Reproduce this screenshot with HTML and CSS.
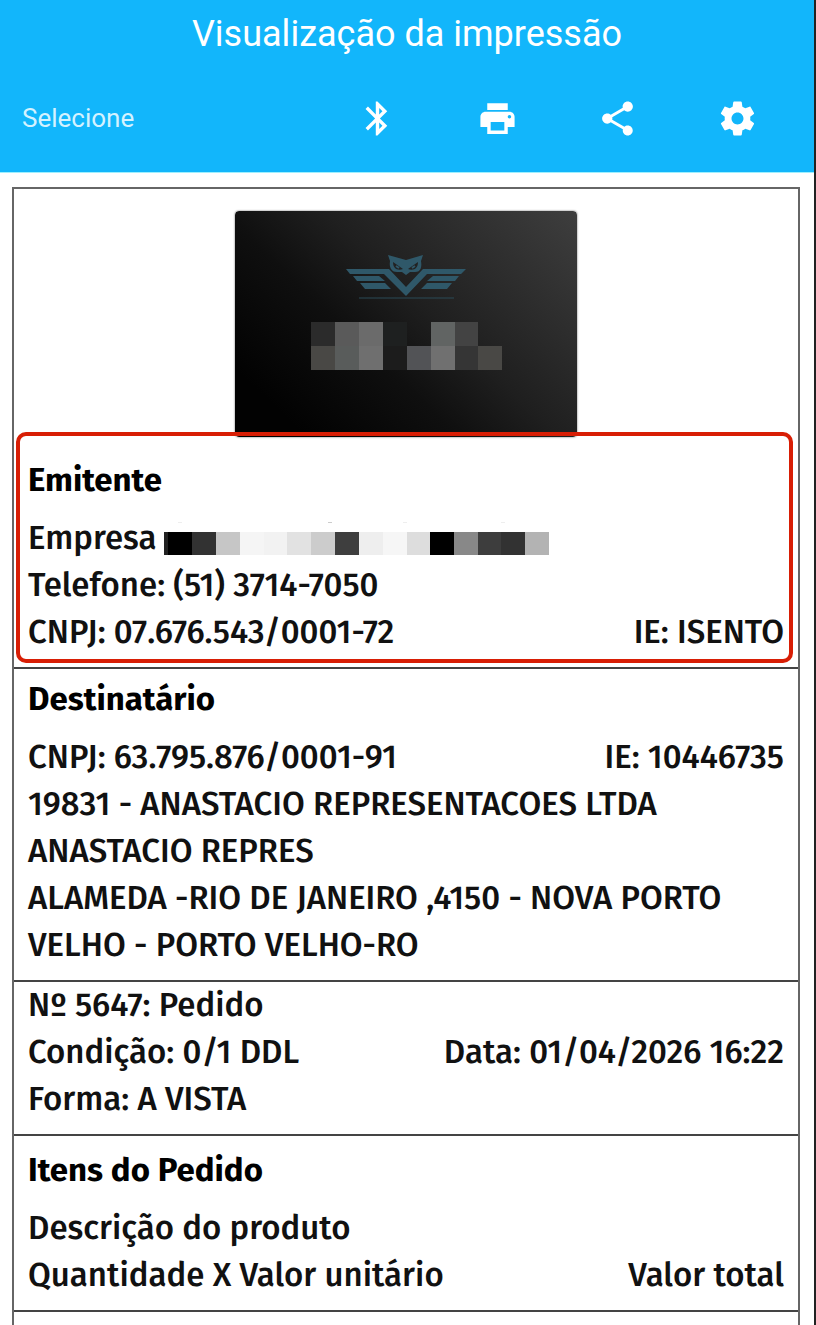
FILE: index.html
```html
<!DOCTYPE html>
<html lang="pt-BR">
<head>
    <meta charset="UTF-8">
    <meta name="viewport" content="width=device-width, initial-scale=1.0">
    <title>Visualização da impressão</title>
    <link rel="stylesheet" href="styles.css">
</head>
<body>

<header class="topbar">
    <h1 class="title">Visualização da impressão</h1>
    <div class="toolbar">
        <select class="printer" aria-label="Impressora">
            <option>Selecione</option>
        </select>
        <button class="tool" type="button" aria-label="Bluetooth">
            <svg viewBox="0 0 24 24"><path d="M17.71 7.71L12 2h-1v7.59L6.41 5 5 6.41 10.59 12 5 17.59 6.41 19 11 14.41V22h1l5.71-5.71-4.3-4.29 4.3-4.29zM13 5.83l1.88 1.88L13 9.59V5.83zm1.88 10.46L13 18.17v-3.76l1.88 1.88z"/></svg>
        </button>
        <button class="tool" type="button" aria-label="Imprimir">
            <svg viewBox="0 0 24 24"><path d="M19 8H5c-1.66 0-3 1.34-3 3v6h4v4h12v-4h4v-6c0-1.66-1.34-3-3-3zm-3 11H8v-5h8v5zm3-7c-.55 0-1-.45-1-1s.45-1 1-1 1 .45 1 1-.45 1-1 1zm-1-9H6v4h12V3z"/></svg>
        </button>
        <button class="tool" type="button" aria-label="Compartilhar">
            <svg viewBox="0 0 24 24"><path d="M18 16.08c-.76 0-1.44.3-1.96.77L8.91 12.7c.05-.23.09-.46.09-.7s-.04-.47-.09-.7l7.05-4.11c.54.5 1.25.81 2.04.81 1.66 0 3-1.34 3-3s-1.34-3-3-3-3 1.34-3 3c0 .24.04.47.09.7L8.04 9.81C7.5 9.31 6.79 9 6 9c-1.66 0-3 1.34-3 3s1.34 3 3 3c.79 0 1.5-.31 2.04-.81l7.12 4.16c-.05.21-.08.43-.08.65 0 1.61 1.31 2.92 2.92 2.92s2.92-1.31 2.92-2.92-1.31-2.92-2.92-2.92z"/></svg>
        </button>
        <button class="tool" type="button" aria-label="Configurações">
            <svg viewBox="0 0 24 24"><path d="M19.43 12.98c.04-.32.07-.64.07-.98s-.03-.66-.07-.98l2.11-1.65c.19-.15.24-.42.12-.64l-2-3.46c-.12-.22-.39-.3-.61-.22l-2.49 1c-.52-.4-1.08-.73-1.69-.98l-.38-2.65C14.46 2.18 14.25 2 14 2h-4c-.25 0-.46.18-.49.42l-.38 2.65c-.61.25-1.17.59-1.69.98l-2.49-1c-.23-.09-.49 0-.61.22l-2 3.46c-.13.22-.07.49.12.64l2.11 1.65c-.04.32-.07.65-.07.98s.03.66.07.98l-2.11 1.65c-.19.15-.24.42-.12.64l2 3.46c.12.22.39.3.61.22l2.49-1c.52.4 1.08.73 1.69.98l.38 2.65c.03.24.24.42.49.42h4c.25 0 .46-.18.49-.42l.38-2.65c.61-.25 1.17-.59 1.69-.98l2.49 1c.23.09.49 0 .61-.22l2-3.46c.12-.22.07-.49-.12-.64l-2.11-1.65zM12 15.5c-1.93 0-3.5-1.57-3.5-3.5s1.57-3.5 3.5-3.5 3.5 1.57 3.5 3.5-1.57 3.5-3.5 3.5z"/></svg>
        </button>
    </div>
</header>

<main class="receipt">

    <svg class="logo" viewBox="0 0 342 226" role="img" aria-label="Logo da empresa">
        <defs>
            <linearGradient id="card" x1="0" y1=".7" x2="1" y2="0">
                <stop offset="0" stop-color="#020202"/>
                <stop offset=".3" stop-color="#0f0f0f"/>
                <stop offset=".5" stop-color="#1f1f1f"/>
                <stop offset="1" stop-color="#3e3e3e"/>
            </linearGradient>
        </defs>
        <rect width="342" height="226" rx="4" fill="url(#card)"/>
        <!-- owl with open wings -->
        <g fill="#2f5869">
            <path d="M111 58h43l17 18 17-18h43l-5 5h-34l-21 22-22-22h-34z"/>
            <path d="M118 65h26l6 5h-28zM224 65h-26l-6 5h28zM125 72h25l6 6h-26zM217 72h-25l-6 6h26z"/>
            <path d="M153 44l18 5 17-5-2 6c1 6 0 11-6 11h-5l-4 3-4-3h-5c-6 0-8-5-7-11z"/>
        </g>
        <path d="M158 51l10 7c-5 2-10 0-10-7zM183 51l-10 7c5 2 10 0 10-7z" fill="#222"/>
        <path d="M161 55l3 2M180 55l-3 2" stroke="#2f5869" stroke-width="2"/>
        <path d="M124 87h95" stroke="#2b4a56"/>
        <!-- company name, masked -->
        <g>
            <path fill="#2b2b2b" d="M76 111h24v24H76z"/>
            <path fill="#5a5a5a" d="M100 111h24v24h-24z"/>
            <path fill="#6b6b6b" d="M124 111h24v24h-24z"/>
            <path fill="#1e2020" d="M148 111h24v24h-24z"/>
            <path fill="#616463" d="M196 111h24v24h-24z"/>
            <path fill="#434343" d="M220 111h23v24h-23z"/>
            <path fill="#494845" d="M76 135h24v24H76z"/>
            <path fill="#595c5b" d="M100 135h24v24h-24z"/>
            <path fill="#6f6f6f" d="M124 135h24v24h-24z"/>
            <path fill="#1c1c1c" d="M148 135h24v24h-24z"/>
            <path fill="#525356" d="M172 135h24v24h-24z"/>
            <path fill="#707070" d="M196 135h24v24h-24z"/>
            <path fill="#353535" d="M220 135h23v24h-23z"/>
            <path fill="#494845" d="M243 135h24v24h-24z"/>
        </g>
    </svg>

    <section class="block emitente">
        <h2>Emitente</h2>
        <div class="row company">
            <span>Empresa</span>
            <svg class="mask" viewBox="0 0 385 33" aria-hidden="true" shape-rendering="crispEdges">
                <path fill="#222" d="M0 10h4v23H0z"/>
                <path fill="#000" d="M4 10h24v23H4z"/>
                <path fill="#323232" d="M28 10h24v23H28z"/>
                <path fill="#c6c6c6" d="M52 10h24v23H52z"/>
                <path fill="#f5f5f5" d="M76 10h24v23H76z"/>
                <path fill="#f2f2f2" d="M100 10h23v23h-23z"/>
                <path fill="#e2e2e2" d="M123 10h24v23h-24z"/>
                <path fill="#ccc" d="M147 10h24v23h-24z"/>
                <path fill="#3e3e3e" d="M171 10h24v23h-24z"/>
                <path fill="#eee" d="M195 10h24v23h-24z"/>
                <path fill="#f6f6f6" d="M219 10h24v23h-24z"/>
                <path fill="#ddd" d="M243 10h23v23h-23z"/>
                <path fill="#000" d="M266 10h24v23h-24z"/>
                <path fill="#888" d="M290 10h24v23h-24z"/>
                <path fill="#3d3d3d" d="M314 10h23v23h-23z"/>
                <path fill="#323232" d="M337 10h24v23h-24z"/>
                <path fill="#b3b3b3" d="M361 10h24v23h-24z"/>
                <path fill="#eee" d="M14 0h4v1h-4zM239 0h4v1h-4zM337 0h4v1h-4z"/>
                <path fill="#ccc" d="M164 0h4v1h-4z"/>
            </svg>
        </div>
        <div class="row"><span>Telefone: (51) 3714-7050</span></div>
        <div class="row"><span>CNPJ: 07.676.543/0001-72</span><span>IE: ISENTO</span></div>
    </section>

    <section class="block destinatario">
        <h2>Destinatário</h2>
        <div class="row"><span>CNPJ: 63.795.876/0001-91</span><span>IE: 10446735</span></div>
        <p>19831 - ANASTACIO REPRESENTACOES LTDA</p>
        <p>ANASTACIO REPRES</p>
        <p>ALAMEDA -RIO DE JANEIRO ,4150 - NOVA PORTO VELHO - PORTO VELHO-RO</p>
    </section>

    <section class="block pedido">
        <p>Nº 5647: Pedido</p>
        <div class="row"><span>Condição: 0/1 DDL</span><span>Data: 01/04/2026 16:22</span></div>
        <p>Forma: A VISTA</p>
    </section>

    <section class="block itens">
        <h2>Itens do Pedido</h2>
        <p>Descrição do produto</p>
        <div class="row"><span>Quantidade X Valor unitário</span><span>Valor total</span></div>
    </section>

</main>

</body>
</html>
```
FILE: styles.css
```css
* {
  box-sizing: border-box;
}

body {
  margin: 0;
  min-height: 100vh;
  display: flex;
  flex-direction: column;
  background: #fff;
  border-right: 2px solid #222;
  color: #111;
  font-family: "Fira Sans", "Noto Sans", sans-serif;
  font-size: 33px;
  font-weight: 500;
  font-variant-numeric: lining-nums;
  line-height: 47px;
}

h1, h2, p {
  margin: 0;
}

/* Blue header */
.topbar {
  background: #12b6fb;
  border-bottom: 1px solid #9ef0ff;
  color: #fff;
  font-family: Roboto, sans-serif;
  padding-bottom: 4px;
}

.title {
  font-size: 36px;
  font-weight: 400;
  line-height: 68px;
  text-align: center;
}

.toolbar {
  display: flex;
  align-items: center;
  height: 100px;
  padding: 0 17px 0 22px;
}

.printer {
  appearance: none;
  flex: 1;
  min-width: 0;
  padding: 0;
  border: 0;
  background: none;
  color: #d4f2ff;
  font-family: inherit;
  font-size: 26px;
}

.tool {
  width: 120px;
  height: 100px;
  padding: 0;
  border: 0;
  background: none;
  cursor: pointer;
}

.tool svg {
  display: block;
  width: 41px;
  height: 41px;
  margin: 0 auto;
  fill: #fff;
}

/* Receipt */
.receipt {
  flex: 1;
  margin: 14px 14px 0 12px;
  border: 2px solid #666;
  border-bottom: 0;
}

.logo {
  display: block;
  width: 342px;
  margin: 22px auto 0;
  border-radius: 4px;
  box-shadow: 0 0 2px #555;
}

.block {
  position: relative;
  padding: 0 14px 11px;
  border-bottom: 2px solid #444;
}

.block h2 {
  margin-bottom: 11px;
  color: #000;
  font-size: 33px;
  font-weight: 700;
}

.row {
  display: flex;
  justify-content: space-between;
}

.company {
  justify-content: flex-start;
  align-items: center;
  gap: 8px;
}

.mask {
  width: 385px;
}

.emitente {
  padding-top: 20px;
}

/* red highlight over the issuer data */
.emitente::after {
  content: "";
  position: absolute;
  top: -5px;
  right: 5px;
  bottom: 4px;
  left: 2px;
  border: 4px solid #d81e05;
  border-radius: 10px;
  pointer-events: none;
}

.destinatario {
  padding-top: 7px;
}

.itens {
  padding-top: 11px;
}
```
